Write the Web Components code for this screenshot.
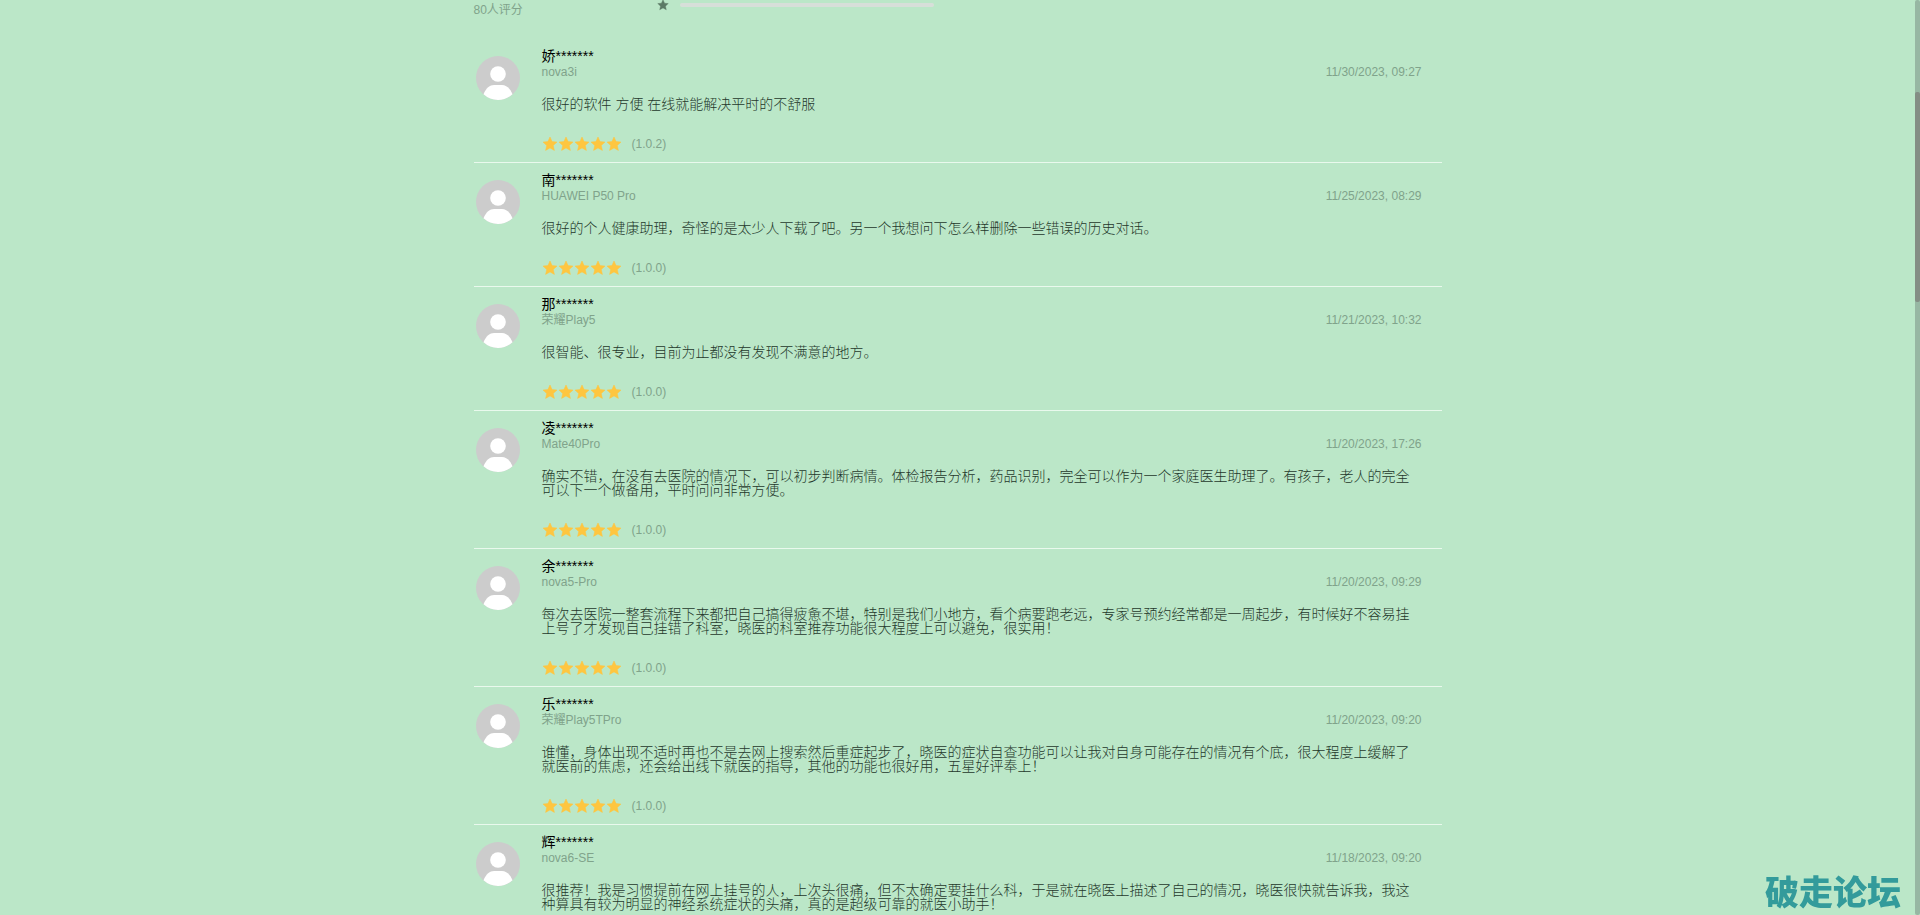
<!DOCTYPE html>
<html lang="zh-CN">
<head>
<meta charset="utf-8">
<title>用户评论</title>
<style>
  body {
    margin: 0;
    background: #bbe7c8;
    color: #000;
    font-family: "Liberation Sans", "Noto Sans CJK SC", sans-serif;
    font-size: 14px;
    line-height: 14px;
  }
</style>
</head>
<body>
<review-page>
  <rating-summary slot="summary">80人评分</rating-summary>

  <app-review name="娇*******" device="nova3i" date="11/30/2023, 09:27" version="1.0.2">很好的软件 方便 在线就能解决平时的不舒服</app-review>
  <app-review name="南*******" device="HUAWEI P50 Pro" date="11/25/2023, 08:29" version="1.0.0">很好的个人健康助理，奇怪的是太少人下载了吧。另一个我想问下怎么样删除一些错误的历史对话。</app-review>
  <app-review name="那*******" device="荣耀Play5" date="11/21/2023, 10:32" version="1.0.0">很智能、很专业，目前为止都没有发现不满意的地方。</app-review>
  <app-review name="凌*******" device="Mate40Pro" date="11/20/2023, 17:26" version="1.0.0">确实不错，在没有去医院的情况下，可以初步判断病情。体检报告分析，药品识别，完全可以作为一个家庭医生助理了。有孩子，老人的完全可以下一个做备用，平时问问非常方便。</app-review>
  <app-review name="余*******" device="nova5-Pro" date="11/20/2023, 09:29" version="1.0.0">每次去医院一整套流程下来都把自己搞得疲惫不堪，特别是我们小地方，看个病要跑老远，专家号预约经常都是一周起步，有时候好不容易挂上号了才发现自己挂错了科室，晓医的科室推荐功能很大程度上可以避免，很实用！</app-review>
  <app-review name="乐*******" device="荣耀Play5TPro" date="11/20/2023, 09:20" version="1.0.0">谁懂，身体出现不适时再也不是去网上搜索然后重症起步了，晓医的症状自查功能可以让我对自身可能存在的情况有个底，很大程度上缓解了就医前的焦虑，还会给出线下就医的指导，其他的功能也很好用，五星好评奉上！</app-review>
  <app-review name="辉*******" device="nova6-SE" date="11/18/2023, 09:20" version="1.0.0">很推荐！我是习惯提前在网上挂号的人，上次头很痛，但不太确定要挂什么科，于是就在晓医上描述了自己的情况，晓医很快就告诉我，我这种算具有较为明显的神经系统症状的头痛，真的是超级可靠的就医小助手！</app-review>
</review-page>
<water-mark>破走论坛</water-mark>

<script>
/**
 * PAGE
 * */

const pageTemplate = document.createElement("template");

pageTemplate.innerHTML = `
  <style>
    :host {
      display: flex;
      height: 100vh;
      overflow: hidden;
    }
    main {
      flex: 1;
      min-width: 0;
      overflow: hidden;
    }
    .column {
      max-width: 968px;
      margin: 0 auto;
    }
    .track {
      width: 5px;
      border-radius: 2px;
      background: #97b7a3;
    }
    .thumb {
      height: 23%;
      margin-top: 92px;
      border-radius: 2px;
      background: #848e85;
    }
  </style>
  <main>
    <div class="column">
      <slot name="summary"></slot>
      <slot></slot>
    </div>
  </main>
  <div class="track"><div class="thumb"></div></div>
`;

class ReviewPage extends HTMLElement {
  constructor() {
    super();
    const shadow = this.attachShadow({ mode: "open" });
    shadow.appendChild(pageTemplate.content.cloneNode(true));
  }
}
customElements.define("review-page", ReviewPage);

/**
 * STAR
 * */

const starTemplate = document.createElement("template");

starTemplate.innerHTML = `
  <style>
    :host {
      display: block;
      width: 16px;
      height: 16px;
    }
    svg {
      display: block;
      width: 100%;
      height: 100%;
      fill: currentColor;
      stroke: currentColor;
      stroke-width: 1;
      stroke-opacity: 0.5;
      stroke-linejoin: round;
    }
  </style>
  <svg viewBox="0 0 16 16" aria-hidden="true">
    <path d="M8 1 10.100 5.600 15 6.100 11.300 9.500 12.400 14.400 8 11.900 3.600 14.400 4.700 9.500 1 6.100 5.900 5.600Z"/>
  </svg>
`;

class StarIcon extends HTMLElement {
  constructor() {
    super();
    const shadow = this.attachShadow({ mode: "open" });
    shadow.appendChild(starTemplate.content.cloneNode(true));
  }
}
customElements.define("star-icon", StarIcon);

/**
 * RATING SUMMARY
 * The end of the score block: rating count and the one star bar
 * */

const summaryTemplate = document.createElement("template");

summaryTemplate.innerHTML = `
  <style>
    :host {
      display: flex;
      height: 39px;
      color: #80a38b;
      font-size: 12px;
      line-height: 20px;
    }
    .count {
      width: 183px;
    }
    .level {
      display: flex;
      align-items: center;
      gap: 11px;
      height: 10px;
    }
    star-icon {
      width: 12px;
      height: 12px;
      color: #5c7a66;
    }
    .bar {
      width: 254px;
      height: 4px;
      border-radius: 2px;
      background: #d7dfd9;
    }
  </style>
  <div class="count"><slot></slot></div>
  <div class="level">
    <star-icon></star-icon>
    <div class="bar"></div>
  </div>
`;

class RatingSummary extends HTMLElement {
  constructor() {
    super();
    const shadow = this.attachShadow({ mode: "open" });
    shadow.appendChild(summaryTemplate.content.cloneNode(true));
  }
}
customElements.define("rating-summary", RatingSummary);

/**
 * REVIEW
 * */

const reviewTemplate = document.createElement("template");

reviewTemplate.innerHTML = `
  <style>
    :host {
      display: flex;
      gap: 22px;
      padding: 9px 20px 10px 2px;
      border-bottom: 1px solid #e9f9ed;
    }
    .avatar {
      flex: none;
      width: 44px;
      height: 44px;
      margin-top: 8px;
    }
    .content {
      flex: 1;
      min-width: 0;
    }
    .name {
      margin-bottom: 1px;
      line-height: 16px;
    }
    .meta, .rating {
      display: flex;
      color: #80a38b;
      font-size: 12px;
      line-height: 14px;
    }
    .meta {
      justify-content: space-between;
    }
    p {
      margin: 18px 10px 25px 0;
      color: #24382b;
      font-weight: 300;
    }
    .rating {
      align-items: center;
      line-height: 16px;
    }
    star-icon {
      color: #fec640;
    }
    .version {
      margin-left: 10px;
    }
  </style>
  <svg class="avatar" viewBox="0 0 44 44" aria-hidden="true">
    <circle cx="22" cy="22" r="22" fill="#ccc"/>
    <circle cx="22" cy="18" r="7.8" fill="#fff"/>
    <path d="M7.500 38.300C10 32 14 29 18 29h8c4 0 8 3 10.500 9.300A21.500 21.500 0 0 1 7.500 38.300Z" fill="#fff"/>
  </svg>
  <div class="content">
    <div class="name"></div>
    <div class="meta"><span class="device"></span><time></time></div>
    <p><slot></slot></p>
    <div class="rating">
      <star-icon></star-icon><star-icon></star-icon><star-icon></star-icon><star-icon></star-icon><star-icon></star-icon>
      <span class="version"></span>
    </div>
  </div>
`;

class AppReview extends HTMLElement {
  constructor() {
    super();
    const shadow = this.attachShadow({ mode: "open" });
    shadow.appendChild(reviewTemplate.content.cloneNode(true));
  }

  connectedCallback() {
    const shadow = this.shadowRoot;
    shadow.querySelector(".name").textContent = this.getAttribute("name");
    shadow.querySelector(".device").textContent = this.getAttribute("device");
    shadow.querySelector("time").textContent = this.getAttribute("date");
    shadow.querySelector(".version").textContent = `(${this.getAttribute("version")})`;
  }
}
customElements.define("app-review", AppReview);

/**
 * WATERMARK
 * */

const markTemplate = document.createElement("template");

markTemplate.innerHTML = `
  <style>
    :host {
      position: fixed;
      right: 19px;
      bottom: 6px;
      color: #339b9b;
      font-family: "Noto Sans CJK SC", sans-serif;
      font-size: 34px;
      line-height: 36px;
      font-weight: 900;
    }
  </style>
  <slot></slot>
`;

class WaterMark extends HTMLElement {
  constructor() {
    super();
    const shadow = this.attachShadow({ mode: "open" });
    shadow.appendChild(markTemplate.content.cloneNode(true));
  }
}
customElements.define("water-mark", WaterMark);
</script>
</body>
</html>
